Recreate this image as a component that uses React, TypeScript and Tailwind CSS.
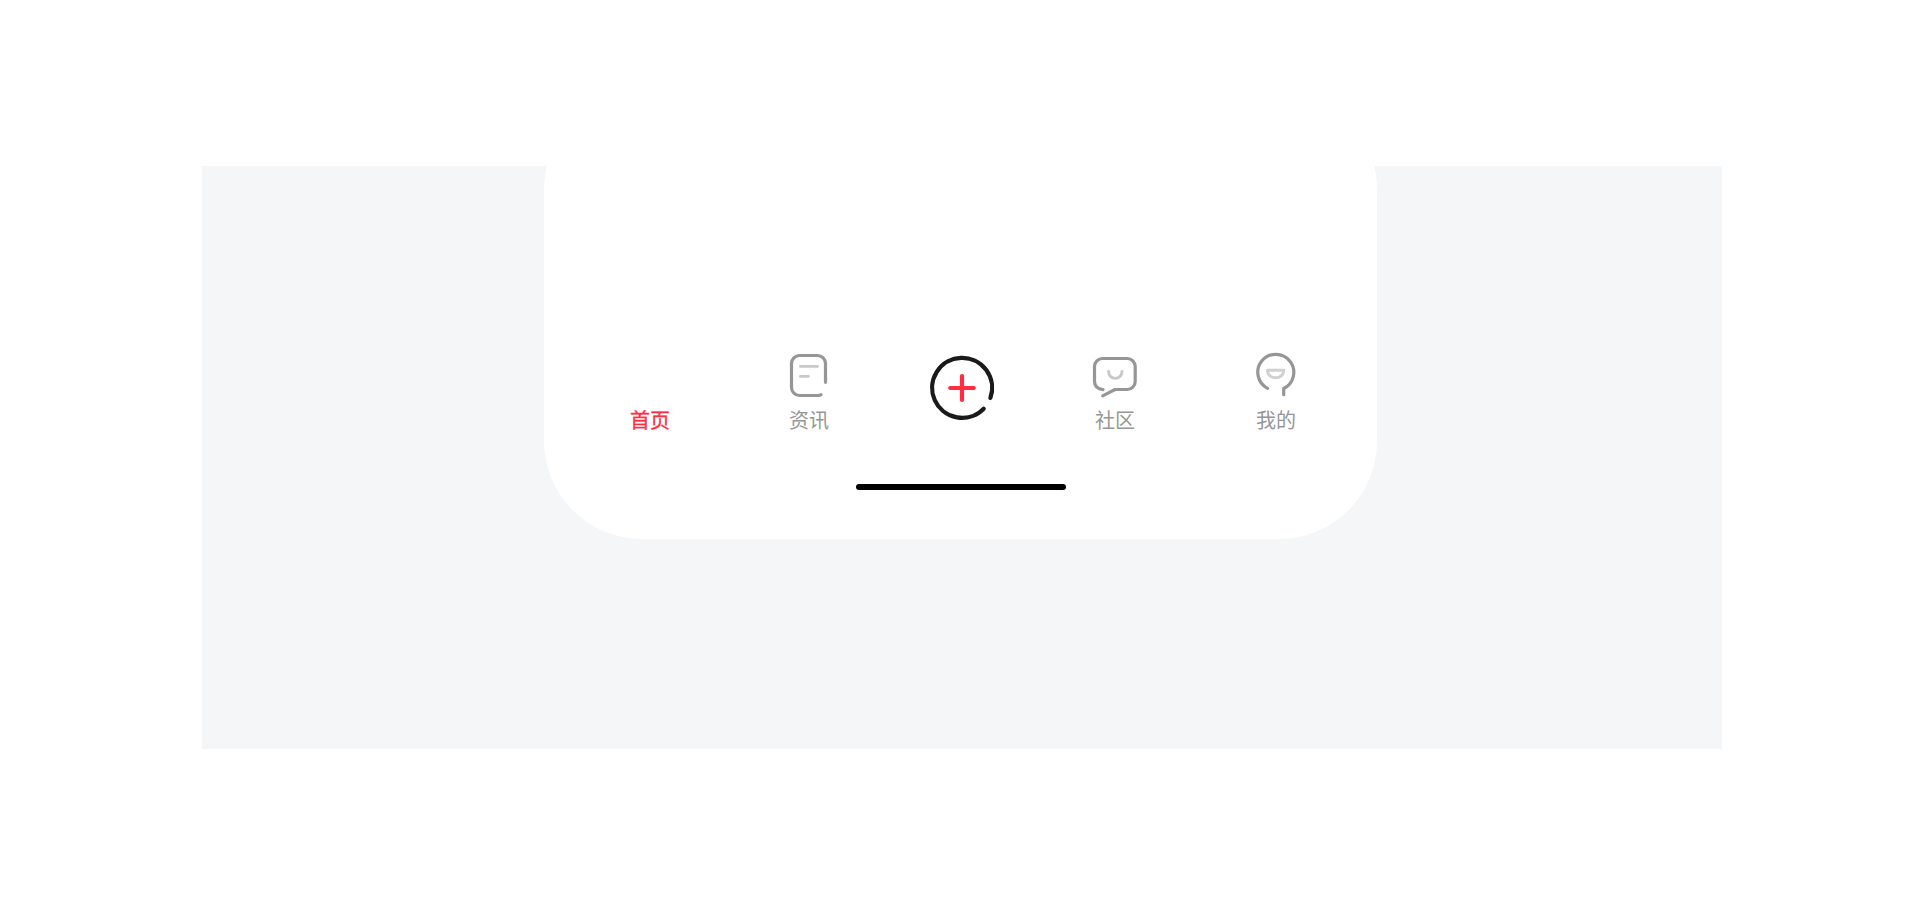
import React from "react"

function NewsIcon() {
  return (
    <svg className="w-12 h-12" viewBox="0 0 48 48" fill="none" strokeLinecap="round">
      <path
        d="M40.5 32.3V13.5a8 8 0 0 0-8-8h-18a8 8 0 0 0-8 8v24a8 8 0 0 0 8 8h18.5q2 0 3-.8"
        stroke="#969696"
        strokeWidth="3.2"
      />
      <path d="M15.4 16.4h17M15.4 26.4h8" stroke="#c8c8c8" strokeWidth="2.9" />
    </svg>
  )
}

function CommunityIcon() {
  return (
    <svg className="w-12 h-12" viewBox="0 0 48 48" fill="none" strokeLinecap="round" strokeLinejoin="round">
      <path
        d="M12 39.6q-8.5-.8-8.5-8.6V16.5a8 8 0 0 1 8-8h24.7a8 8 0 0 1 8 8v15a8 8 0 0 1-8 8H24L11.7 45.8"
        stroke="#969696"
        strokeWidth="3.2"
      />
      <path d="M17.6 21.5a6.7 6.9 0 0 0 13.4 0" stroke="#c8c8c8" strokeWidth="2.9" />
    </svg>
  )
}

function ProfileIcon() {
  return (
    <svg className="w-12 h-12" viewBox="0 0 48 48" fill="none" strokeLinecap="round" strokeLinejoin="round">
      <path d="M15.5 38.3A18 18 0 1 1 31.7 38.5V44.7" stroke="#969696" strokeWidth="3.2" />
      <path d="M15.5 20.2h16.2c0 10-16.2 10-16.2 0z" stroke="#d0d0d0" strokeWidth="2.9" />
    </svg>
  )
}

function PublishIcon() {
  return (
    <svg className="w-18 h-18" viewBox="0 0 72 72" fill="none" strokeLinecap="round">
      <path d="M64.4 45.9A30 30 0 1 0 57.7 56.7" stroke="#1a1a1a" strokeWidth="4.2" />
      <path d="M24.2 36h23.6M36 24v24" stroke="#ff2d3f" strokeWidth="4.2" />
    </svg>
  )
}

export default function TabBar() {
  const tabs = [
    { label: "首页", icon: null, width: "w-40", color: "text-[#ff2d3f] [-webkit-text-stroke:0.3px]" },
    { label: "资讯", icon: <NewsIcon />, width: "w-[158px]", color: "text-[#969696]" },
    { label: "", icon: <PublishIcon />, width: "w-[148px] pt-0.5", color: "" },
    { label: "社区", icon: <CommunityIcon />, width: "w-[158px]", color: "text-[#969696]" },
    { label: "我的", icon: <ProfileIcon />, width: "w-[164px]", color: "text-[#969696]" },
  ]

  return (
    <div className="w-full h-[900px] bg-white pt-[166px] pl-[202px] font-['Noto_Sans_CJK_SC',sans-serif]">
      <div className="w-[1520px] h-[583px] bg-[#f5f6f8] overflow-hidden">
        {/* Phone body, cut off by the top of the panel */}
        <div className="-mt-[75px] ml-[342px] w-[833px] h-[448px] rounded-[98px] bg-white pt-[259px]">
          <nav className="flex items-start pl-[26px] h-[134px]">
            {tabs.map((tab, index) => (
              <div key={index} className={`flex flex-col items-center shrink-0 ${tab.width}`}>
                {tab.icon || <div className="h-12" />}
                {tab.label && (
                  <span className={`mt-2.5 text-[20px] leading-6 ${tab.color}`}>{tab.label}</span>
                )}
              </div>
            ))}
          </nav>

          {/* Home indicator */}
          <div className="ml-[312px] w-[210px] h-1.5 rounded-full bg-black" />
        </div>
      </div>
    </div>
  )
}
